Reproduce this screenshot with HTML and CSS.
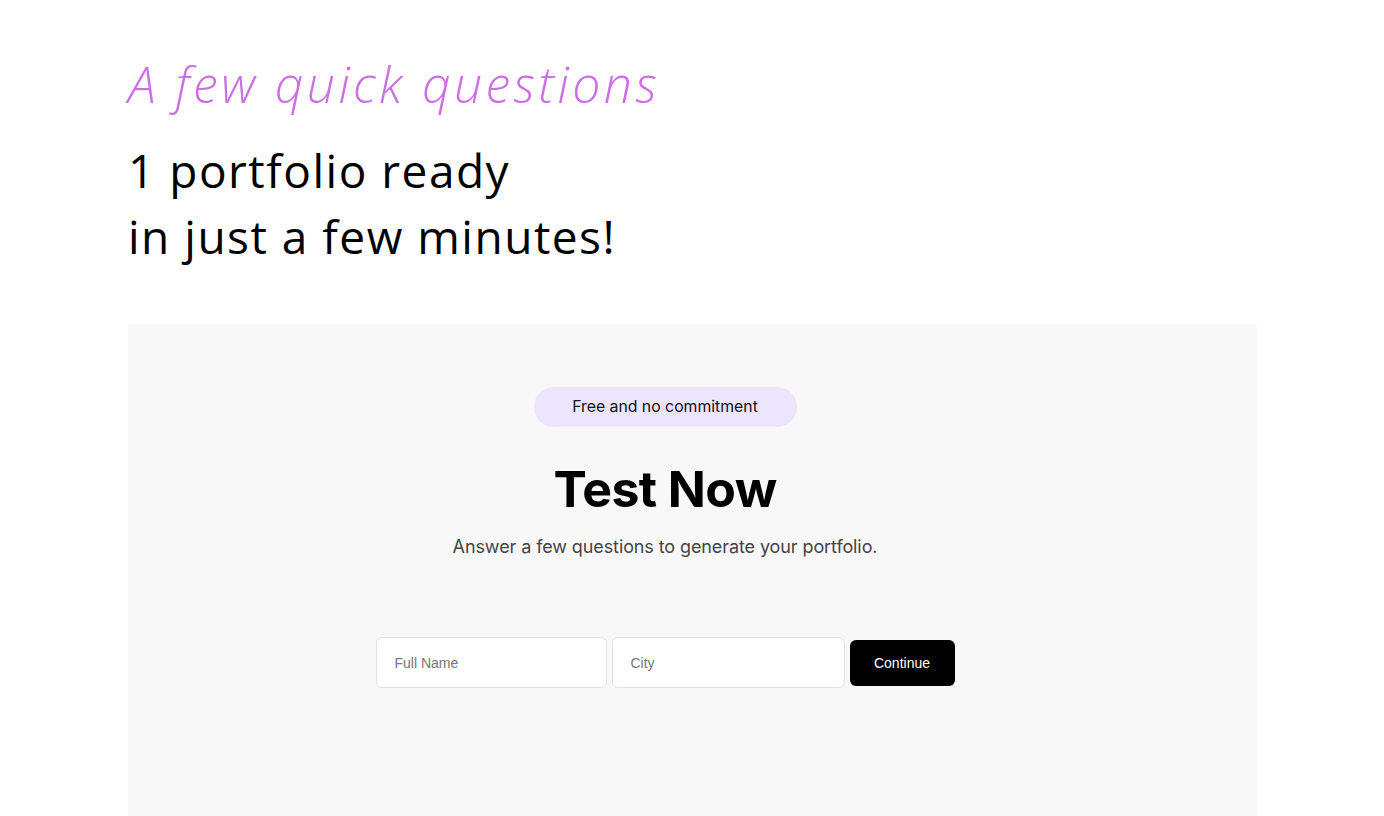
FILE: index.html
```html
<!DOCTYPE html>
<html lang="en">
<head>
  <meta charset="UTF-8" />
  <meta name="viewport" content="width=device-width, initial-scale=1" />
  <title>A few quick questions</title>
  <link rel="stylesheet" href="styles.css">
</head>
<body>
<main class="page">
  <header class="intro">
    <h2 class="eyebrow">A few quick questions</h2>
    <h1 class="headline">1 portfolio ready<br>in just a few minutes!</h1>
  </header>

  <section class="test-card">
    <div class="test-inner">
      <span class="pill">Free and no commitment</span>
      <h3 class="test-title">Test Now</h3>
      <p class="test-sub">Answer a few questions to generate your portfolio.</p>
      <form class="test-form" onsubmit="return false">
        <input class="field field-name" type="text" placeholder="Full Name" />
        <input class="field field-city" type="text" placeholder="City" />
        <button class="continue-btn" type="submit">Continue</button>
      </form>
    </div>
  </section>
</main>
</body>
</html>
```

FILE: styles.css
```css
* { margin: 0; padding: 0; box-sizing: border-box; }
html, body {
  height: 100%;
  overflow: hidden;
  background: #fff;
  color: #000;
  font-family: 'Open Sans', 'Noto Sans', sans-serif;
}

.page {
  padding: 52px 127px 0 128px;
}

.intro {
  margin-bottom: 55px;
}

.eyebrow {
  font-size: 50px;
  font-weight: 300;
  font-style: italic;
  color: #cc6fe6;
  line-height: 64px;
  letter-spacing: 3.4px;
}

.headline {
  margin-top: 21px;
  font-size: 46px;
  font-weight: 400;
  line-height: 66px;
  letter-spacing: 1.5px;
  color: #000;
}

.test-card {
  background: #f8f8f8;
  border-radius: 4px;
  height: 520px;
  padding: 63px 55px 0 0;
}

.test-inner {
  display: flex;
  flex-direction: column;
  align-items: center;
  font-family: Inter, 'Noto Sans', sans-serif;
}

.pill {
  display: inline-block;
  width: 263px;
  height: 40px;
  line-height: 40px;
  text-align: center;
  border-radius: 20px;
  background: #ede5fd;
  color: #111;
  font-size: 15.8px;
}

.test-title {
  margin-top: 34px;
  font-size: 50px;
  font-weight: 700;
  line-height: 56px;
  letter-spacing: -0.6px;
}

.test-sub {
  margin-top: 18px;
  font-size: 18px;
  color: #444;
  line-height: 24px;
  letter-spacing: -0.1px;
}

.test-form {
  margin-top: 78px;
  display: flex;
  align-items: center;
  gap: 5px;
  font-family: 'Liberation Sans', Arial, sans-serif;
}

.field {
  height: 51px;
  border: 1px solid #e1e3e8;
  border-radius: 6px;
  background: #fff;
  padding: 0 18px;
  font-family: inherit;
  font-size: 14px;
  color: #222;
  outline: none;
}

.field::placeholder {
  color: #767676;
}

.field-name { width: 231px; }
.field-city { width: 233px; }

.continue-btn {
  width: 105px;
  height: 46px;
  border: none;
  border-radius: 6px;
  background: #000;
  color: #fff;
  font-family: inherit;
  font-size: 14px;
  cursor: pointer;
}
```
